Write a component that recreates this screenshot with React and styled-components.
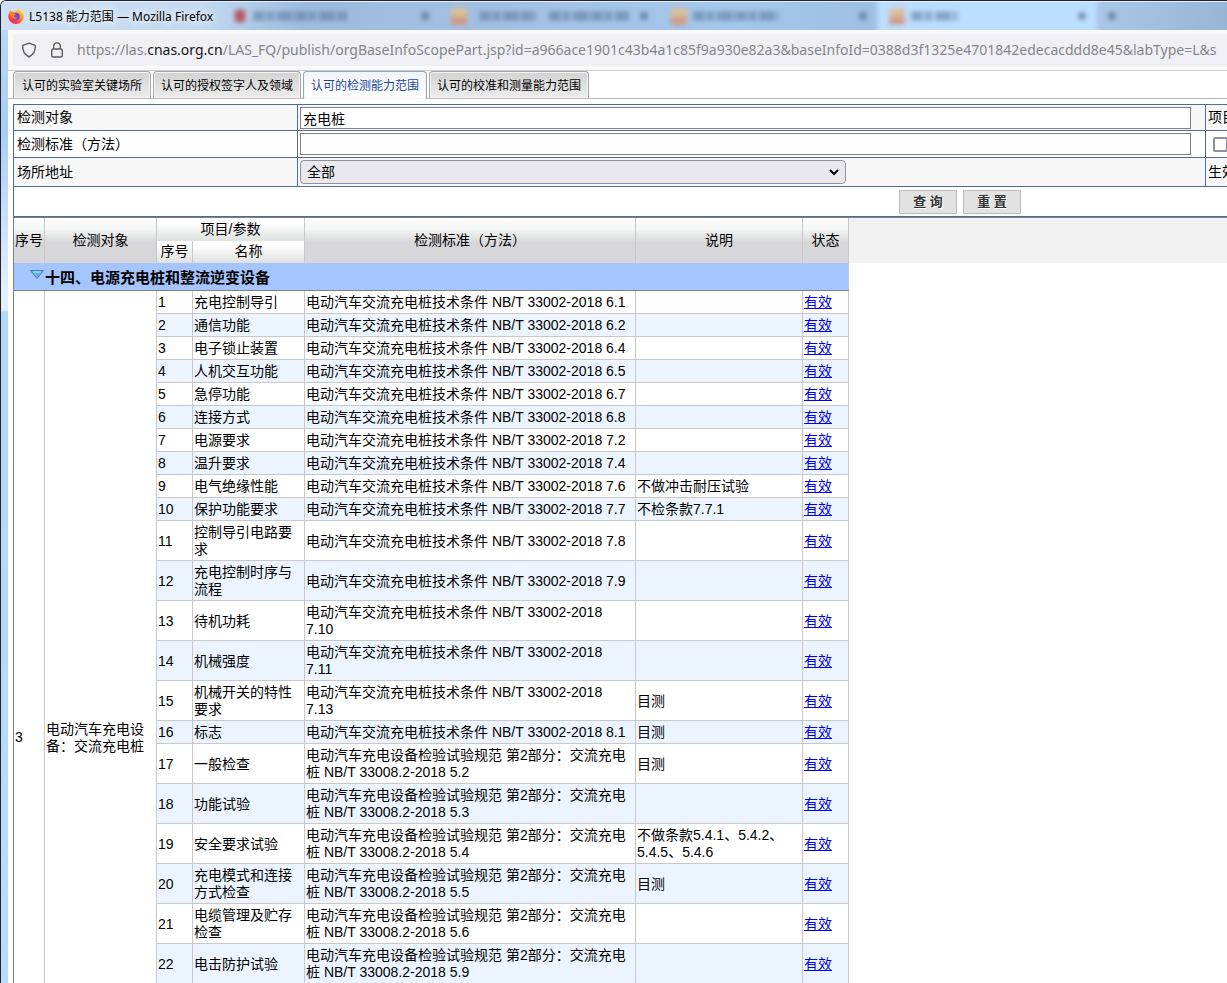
import { createGlobalStyle, styled } from "styled-components";

const GlobalStyle = createGlobalStyle`
  * {
    box-sizing: border-box;
  }
  body {
    margin: 0;
    background: #ffffff;
    color: #000000;
    font-family: "Liberation Sans", "Noto Sans CJK SC", sans-serif;
    font-size: 14px;
    line-height: 17px;
  }
`;

// WINDOW
const Window = styled.div`
  height: 100vh;
  overflow: hidden;
  display: flex;
  flex-direction: column;
  border: solid #1f2430;
  border-width: 1px 0 0 1px;
  border-top-left-radius: 6px;
  background: linear-gradient(#c3d9f0 0, #a9cdf5 130px, #e4effb 290px, #e4effb 309px, #b4d8fc 311px, #b9dbfb 100%);
`;
const TitleBar = styled.header`
  position: relative;
  flex: none;
  display: flex;
  align-items: center;
  gap: 5px;
  height: 29px;
  padding-left: 7px;
  overflow: hidden;
  border-top: 1px solid #e6f0fa;
  background: linear-gradient(100deg, #cfe0f2 0, #c3d9f0 200px, #9dbcdd 300px, #a3c1e2 500px, #a5c8ee 60%, #9fbfe3 71%, #a8c6e6 90%, #97b5d5 100%);
`;
const Backdrop = styled.svg`
  position: absolute;
  top: 0;
  left: 0;
  width: 1226px;
  height: 28px;
`;
const Title = styled.span`
  position: relative;
  font-family: "Noto Sans", "Noto Sans CJK SC", sans-serif;
  font-size: 12px;
  text-shadow: 0 0 8px #ffffff, 0 0 8px #ffffff;
`;
const Logo = styled.svg`
  position: relative;
  width: 16px;
  height: 16px;
`;
const Client = styled.div`
  flex: 1;
  min-height: 0;
  display: flex;
  flex-direction: column;
  margin-left: 7px;
  background: #ffffff;
`;
const AddressBar = styled.div`
  flex: none;
  padding: 4px 0 4px 5px;
  background: #f9f9fb;
  border-bottom: 1px solid #cccccc;
`;
const Address = styled.div`
  display: flex;
  align-items: center;
  gap: 12px;
  height: 32px;
  padding-left: 8px;
  overflow: hidden;
  border-radius: 4px 0 0 4px;
  background: #f0f0f4;
  white-space: nowrap;
`;
const AddressIcon = styled.svg`
  flex: none;
  width: 16px;
  height: 16px;
  fill: none;
  stroke: #5b5b66;
  stroke-width: 1.4;
`;
const Url = styled.span`
  color: #84848b;
  font-family: "Noto Sans", sans-serif;
  font-size: 14px;
  line-height: 24px;
`;
const Host = styled.span`
  color: #15141a;
`;

// TABS
const Tabs = styled.nav`
  flex: none;
  display: flex;
  gap: 2px;
  height: 28px;
  padding-left: 5px;
  border-bottom: 1px solid #b9b9c3;
`;
const Tab = styled.a`
  height: ${({ $active }) => ($active ? "28px" : "27px")};
  padding: 6px 8px 0;
  border: 1px solid ${({ $active }) => ($active ? "#8fa6c9" : "#a5a5a5")};
  border-bottom: 0;
  border-radius: 4px 4px 0 0;
  background: ${({ $active }) =>
    $active ? "linear-gradient(#f1f4f8, #ffffff)" : "linear-gradient(#d2d2d2, #ececec)"};
  box-shadow: inset 0 0 0 1px #f4f4f4;
  color: ${({ $active }) => ($active ? "#1e4a9c" : "#000000")};
  font-size: 12px;
  text-decoration: none;
  white-space: nowrap;
  & + & {
    padding: 6px 7px 0;
  }
`;

// SEARCH FORM
const Form = styled.form`
  flex: none;
  margin: 5px 0 0 5px;
  border: solid #4f6d9c;
  border-width: 1px 0 1px 1px;
`;
const FormRow = styled.div`
  display: grid;
  grid-template-columns: 283px 1fr 22px;
  height: ${({ $height }) => $height}px;
  border-bottom: 1px solid #4f6d9c;
  background: ${({ $shaded }) => ($shaded ? "#f7f7f7" : "#ffffff")};
`;
const FormCell = styled.div`
  display: flex;
  align-items: center;
  padding-left: 2px;
  overflow: hidden;
  white-space: nowrap;
  & + & {
    border-left: 1px solid #4f6d9c;
  }
`;
const FormLabel = styled.label`
  display: flex;
  align-items: center;
  padding-left: 3px;
`;
const FieldCell = styled(FormCell)`
  border-left: 1px solid #4f6d9c;
`;
const TextField = styled.input`
  width: calc(100% - 14px);
  height: 22px;
  padding: 0 2px;
  border: 1px solid #808080;
  background: #ffffff;
  font: inherit;
`;
const Picker = styled.select`
  appearance: none;
  width: 546px;
  height: 24px;
  padding: 0 6px;
  border: 1px solid #8f8f9d;
  border-radius: 4px;
  background: #e9e9ed url("data:image/svg+xml,%3Csvg xmlns='http://www.w3.org/2000/svg' width='10' height='7' fill='none' stroke='black' stroke-width='2'%3E%3Cpath d='M1 1l4 4 4-4'/%3E%3C/svg%3E") no-repeat right 6px center;
  color: #000000;
  font: inherit;
`;
const Check = styled.input`
  appearance: none;
  flex: none;
  width: 15px;
  height: 15px;
  margin: 0 0 0 5px;
  border: 2px solid #8f8f9d;
  border-radius: 2px;
  background: #ffffff;
`;
const Actions = styled.div`
  display: flex;
  justify-content: flex-end;
  gap: 6px;
  padding: 3px 206px 2px 0;
`;
const ActionButton = styled.button`
  width: 58px;
  height: 24px;
  padding: 0 0 2px;
  border: 1px solid #b8bcbc;
  background: #e2e2e2;
  color: #333333;
  font: bold 13px/17px "Liberation Sans", "Noto Sans CJK SC", sans-serif;
  text-shadow: 1px 1px 0 #ffffff;
`;

// RESULTS
const Results = styled.div`
  flex: 1;
  min-height: 0;
  margin-left: 5px;
  overflow: hidden;
  border: solid #808080;
  border-width: 1px 0 0 1px;
  background: linear-gradient(#f1f1f1 45px, #ffffff 45px);
`;
const Grid = styled.table`
  width: 835px;
  table-layout: fixed;
  border-collapse: separate;
  border-spacing: 0;
`;
const HeadCell = styled.th`
  height: ${({ $half }) => ($half ? "22px" : "45px")};
  padding: 0;
  border-right: 1px solid #c8c8c8;
  background: ${({ $half }) =>
    $half
      ? "linear-gradient(#ffffff 20%, #dfe0e0)"
      : "linear-gradient(#ffffff, #f4f5f5 25%, #d7d7d9 55%, #d7d7d9)"};
  font-weight: normal;
  text-align: center;
`;
const GroupCell = styled.td`
  height: 28px;
  padding: 2px 0 0 16px;
  border-right: 1px solid #c8c8c8;
  border-bottom: 1px solid #808080;
  background: #a5c5fe;
  font-weight: bold;
  font-size: 15px;
`;
const Arrow = styled.svg`
  width: 14px;
  height: 9px;
  margin-right: 1px;
  vertical-align: 4px;
`;
const Row = styled.tr`
  background: ${({ $striped }) => ($striped ? "#ecf5ff" : "#ffffff")};
`;
const Cell = styled.td`
  padding: 3px 4px 2px 1px;
  border: solid #c8c8c8;
  border-width: 0 1px 1px 0;
  background: ${({ $plain }) => ($plain ? "#ffffff" : "inherit")};
  vertical-align: middle;
`;
const StatusLink = styled.a`
  color: #0000ee;
`;
const Tail = styled.td`
  height: 200px;
`;

const AC = "电动汽车交流充电桩技术条件 NB/T 33002-2018 ";
const TEST = "电动汽车充电设备检验试验规范 第2部分：交流充电桩 NB/T 33008.2-2018 ";

const tabs = [
  "认可的实验室关键场所",
  "认可的授权签字人及领域",
  "认可的检测能力范围",
  "认可的校准和测量能力范围",
];

const rows = [
  ["充电控制导引", AC + "6.1"],
  ["通信功能", AC + "6.2"],
  ["电子锁止装置", AC + "6.4"],
  ["人机交互功能", AC + "6.5"],
  ["急停功能", AC + "6.7"],
  ["连接方式", AC + "6.8"],
  ["电源要求", AC + "7.2"],
  ["温升要求", AC + "7.4"],
  ["电气绝缘性能", AC + "7.6", "不做冲击耐压试验"],
  ["保护功能要求", AC + "7.7", "不检条款7.7.1"],
  ["控制导引电路要求", AC + "7.8"],
  ["充电控制时序与流程", AC + "7.9"],
  ["待机功耗", AC + "7.10"],
  ["机械强度", AC + "7.11"],
  ["机械开关的特性要求", AC + "7.13", "目测"],
  ["标志", AC + "8.1", "目测"],
  ["一般检查", TEST + "5.2", "目测"],
  ["功能试验", TEST + "5.3"],
  ["安全要求试验", TEST + "5.4", "不做条款5.4.1、5.4.2、5.4.5、5.4.6"],
  ["充电模式和连接方式检查", TEST + "5.5", "目测"],
  ["电缆管理及贮存检查", TEST + "5.6"],
  ["电击防护试验", TEST + "5.9"],
];

// tabs of the window behind, seen through the glass title bar
const GlassTabs = () => (
  <Backdrop viewBox="0 0 1226 28" aria-hidden="true">
    <defs>
      <filter id="glass" x="-20%" y="-50%" width="140%" height="200%">
        <feGaussianBlur stdDeviation="2.4" />
      </filter>
    </defs>
    <g filter="url(#glass)">
      <rect x="876" y="-5" width="220" height="40" fill="#bcdeff" />
      <rect x="234" y="8" width="10" height="12" fill="#b7505f" />
      {[450, 670, 888].map((x) => (
        <g key={x}>
          <rect x={x} y="6" width="16" height="9" fill="#d8bf9a" />
          <rect x={x} y="15" width="16" height="8" fill="#cf9a85" />
        </g>
      ))}
      <g stroke="#5f7d9f" strokeWidth="9" strokeDasharray="12 2 7 3 16 2" opacity=".65">
        <path d="M252 14h94M478 14h58M548 14h80M692 14h86M910 14h46" />
      </g>
      <g fill="#6683a3">
        {[424, 643, 862, 1081, 1111].map((x) => (
          <circle key={x} cx={x} cy="14" r="4" />
        ))}
      </g>
    </g>
  </Backdrop>
);

const FirefoxLogo = () => (
  <Logo viewBox="0 0 16 16" aria-hidden="true">
    <defs>
      <linearGradient id="fox" x1="0.8" y1="0" x2="0.2" y2="1">
        <stop offset="0" stopColor="#fff04a" />
        <stop offset=".4" stopColor="#ff9a1f" />
        <stop offset=".75" stopColor="#ff4040" />
        <stop offset="1" stopColor="#e31587" />
      </linearGradient>
    </defs>
    <path
      fill="url(#fox)"
      d="M10.3 0c1 .9 1.8 2 2.1 3 .2-.2.2-.7.1-1.1 2 1.3 3.3 3.9 3.3 6.500A7.800 7.600 0 0 1 .2 8.400C.2 6.500.8 5 1.800 3.900c0-.8.3-1.500.8-2 .1.700.4 1.200.9 1.600.8-.2 1.600-.1 2.300.2C6.900 3.800 8 3.500 8.600 3 8.700 1.900 9.300.8 10.300 0z"
    />
    <circle cx="8" cy="8.5" r="3.8" fill="#7542e5" />
    <path fill="#ff8a1c" d="M3 6.3c1.500-1 3.500-.9 5 .3-1.200.1-1.900.7-1.900 1.500 0 1.300 1.700 1.900 3.200 1.100-.7 2.200-4.700 2.200-5.700-.4z" />
  </Logo>
);

const App = () => {
  return (
    <Window>
      <GlobalStyle />
      <TitleBar>
        <GlassTabs />
        <FirefoxLogo />
        <Title>L5138 能力范围 — Mozilla Firefox</Title>
      </TitleBar>
      <Client>
        <AddressBar>
          <Address>
            <AddressIcon viewBox="0 0 16 16" aria-hidden="true">
              <path d="M8 1.200 14.300 3.300c.3 5-1.300 9.200-6.300 11.700C3 12.500 1.400 8.300 1.700 3.300z" strokeLinejoin="round" />
            </AddressIcon>
            <AddressIcon viewBox="0 0 16 16" aria-hidden="true">
              <rect x="2.7" y="7" width="10.6" height="8" rx="1.5" />
              <path d="M4.700 7V4.200a3.300 3.300 0 0 1 6.600 0V7" />
            </AddressIcon>
            <Url>
              https://las.<Host>cnas.org.cn</Host>
              /LAS_FQ/publish/orgBaseInfoScopePart.jsp?id=a966ace1901c43b4a1c85f9a930e82a3&amp;baseInfoId=0388d3f1325e4701842edecacddd8e45&amp;labType=L&amp;s
            </Url>
          </Address>
        </AddressBar>
        <Tabs>
          {tabs.map((tab, index) => (
            <Tab key={tab} href="#" $active={index === 2}>
              {tab}
            </Tab>
          ))}
        </Tabs>
        <Form>
          <FormRow $height={26} $shaded>
            <FormLabel htmlFor="object">检测对象</FormLabel>
            <FieldCell>
              <TextField id="object" type="text" defaultValue="充电桩" />
            </FieldCell>
            <FormCell>项目</FormCell>
          </FormRow>
          <FormRow $height={27}>
            <FormLabel htmlFor="standard">检测标准（方法）</FormLabel>
            <FieldCell>
              <TextField id="standard" type="text" />
            </FieldCell>
            <FieldCell>
              <Check type="checkbox" aria-label="项目" />
            </FieldCell>
          </FormRow>
          <FormRow $height={29} $shaded>
            <FormLabel htmlFor="place">场所地址</FormLabel>
            <FieldCell>
              <Picker id="place">
                <option>全部</option>
              </Picker>
            </FieldCell>
            <FieldCell>生效</FieldCell>
          </FormRow>
          <Actions>
            <ActionButton type="button">查 询</ActionButton>
            <ActionButton type="button">重 置</ActionButton>
          </Actions>
        </Form>
        <Results>
          <Grid>
            <colgroup>
              {[31, 112, 36, 112, 331, 167, 46].map((width, index) => (
                <col key={index} width={width} />
              ))}
            </colgroup>
            <thead>
              <tr>
                <HeadCell rowSpan={2}>序号</HeadCell>
                <HeadCell rowSpan={2}>检测对象</HeadCell>
                <HeadCell colSpan={2} $half>项目/参数</HeadCell>
                <HeadCell rowSpan={2}>检测标准（方法）</HeadCell>
                <HeadCell rowSpan={2}>说明</HeadCell>
                <HeadCell rowSpan={2}>状态</HeadCell>
              </tr>
              <tr>
                <HeadCell $half>序号</HeadCell>
                <HeadCell $half>名称</HeadCell>
              </tr>
            </thead>
            <tbody>
              <tr>
                <GroupCell colSpan={7}>
                  <Arrow viewBox="0 0 14 9" aria-hidden="true">
                    <path d="M.5.5h13L7 8.500z" fill="#62b4dc" stroke="#3f87b5" />
                    <path d="M3 2h8" stroke="#b5e2f5" />
                  </Arrow>
                  十四、电源充电桩和整流逆变设备
                </GroupCell>
              </tr>
              {rows.map(([name, standard, note], index) => (
                <Row key={name} $striped={index % 2 === 1}>
                  {index === 0 && (
                    <>
                      <Cell rowSpan={rows.length + 1} $plain>3</Cell>
                      <Cell rowSpan={rows.length + 1} $plain>电动汽车充电设备：交流充电桩</Cell>
                    </>
                  )}
                  <Cell>{index + 1}</Cell>
                  <Cell>{name}</Cell>
                  <Cell>{standard}</Cell>
                  <Cell>{note}</Cell>
                  <Cell>
                    <StatusLink href="#">有效</StatusLink>
                  </Cell>
                </Row>
              ))}
              <tr>
                <Tail colSpan={5} />
              </tr>
            </tbody>
          </Grid>
        </Results>
      </Client>
    </Window>
  );
};

export default App;
